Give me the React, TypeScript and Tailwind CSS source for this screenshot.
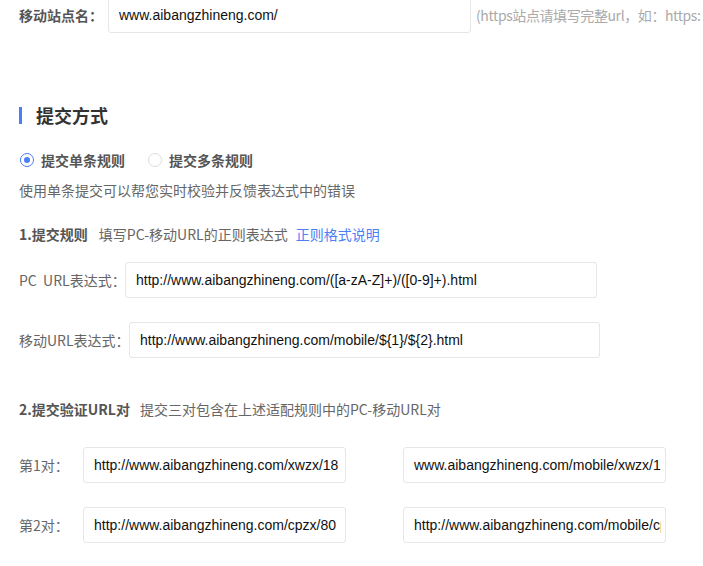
import React from "react";

const cn = "font-['Noto_Sans_CJK_SC',sans-serif]";

function TextBox({ value, className }: { value: string; className: string }) {
  return (
    <input
      readOnly
      value={value}
      className={`h-[36px] shrink-0 rounded-[3px] border border-[#e6e6e6] bg-white pl-[10px] font-['Liberation_Sans',Arial,sans-serif] text-[14px] text-[#111] outline-none ${className}`}
    />
  );
}

function Radio({ checked, label }: { checked?: boolean; label: string }) {
  return (
    <label className="flex items-center gap-[7px]">
      <span
        className={`flex h-[14px] w-[14px] items-center justify-center rounded-full border ${
          checked ? "border-[#4a7ff5]" : "border-[#dcdcdc]"
        }`}
      >
        {checked && <span className="h-[6px] w-[6px] rounded-full bg-[#4a7ff5]" />}
      </span>
      <span className="text-[14px] font-bold text-[#555]">{label}</span>
    </label>
  );
}

export default function App() {
  return (
    <div className={`min-h-[566px] w-[703px] overflow-hidden bg-white pl-[19px] ${cn}`}>
      <div className="-mt-[3px] flex h-[36px] items-center whitespace-nowrap">
        <span className="w-[89px] shrink-0 text-[14px] font-bold text-[#555]">移动站点名：</span>
        <TextBox value="www.aibangzhineng.com/" className="w-[363px] pr-[10px]" />
        <span className="ml-[5px] shrink-0 text-[14px] tracking-[-0.4px] text-[#aaa]">(https站点请填写完整url，如：https:</span>
      </div>

      <div className="mt-[73px] flex h-[18px] items-center">
        <span className="h-[17px] w-[3px] bg-[#4a7ff5]" />
        <span className="ml-[14px] text-[18px] leading-[18px] font-bold text-[#333]">提交方式</span>
      </div>

      <div className="mt-[26px] flex h-[20px] items-center gap-[23px] pl-px">
        <Radio checked label="提交单条规则" />
        <Radio label="提交多条规则" />
      </div>

      <p className="mt-[10px] text-[14px] leading-[20px] text-[#666]">使用单条提交可以帮您实时校验并反馈表达式中的错误</p>

      <div className="mt-[24px] flex h-[20px] items-center whitespace-nowrap text-[14px]">
        <span className="font-bold text-[#555]">1.提交规则</span>
        <span className="ml-[11px] text-[#666]">填写PC-移动URL的正则表达式</span>
        <a className="ml-[8px] text-[#4a7ff5]">正则格式说明</a>
      </div>

      <div className="mt-[18px] flex items-center">
        <span className="w-[106px] shrink-0 text-[14px] whitespace-pre text-[#666]">PC  URL表达式：</span>
        <TextBox value="http://www.aibangzhineng.com/([a-zA-Z]+)/([0-9]+).html" className="w-[472px] pr-[10px]" />
      </div>

      <div className="mt-[24px] flex items-center">
        <span className="w-[110px] shrink-0 whitespace-nowrap text-[14px] text-[#666]">移动URL表达式：</span>
        <TextBox value="http://www.aibangzhineng.com/mobile/${1}/${2}.html" className="w-[471px] pr-[10px]" />
      </div>

      <div className="mt-[41px] flex h-[20px] items-center whitespace-nowrap text-[14px]">
        <span className="font-bold text-[#555]">2.提交验证URL对</span>
        <span className="ml-[10px] text-[#666]">提交三对包含在上述适配规则中的PC-移动URL对</span>
      </div>

      {[
        ["第1对：", "http://www.aibangzhineng.com/xwzx/18", "www.aibangzhineng.com/mobile/xwzx/1"],
        ["第2对：", "http://www.aibangzhineng.com/cpzx/80", "http://www.aibangzhineng.com/mobile/cpzx/80.html"],
      ].map(([label, pc, m], i) => (
        <div key={label} className={`flex items-center ${i === 0 ? "mt-[28px]" : "mt-[24px]"}`}>
          <span className="w-[64px] shrink-0 whitespace-nowrap text-[14px] text-[#666]">{label}</span>
          <TextBox value={pc} className="w-[263px] pr-[4px]" />
          <TextBox value={m} className="ml-[57px] w-[263px] pr-[4px]" />
        </div>
      ))}
    </div>
  );
}
